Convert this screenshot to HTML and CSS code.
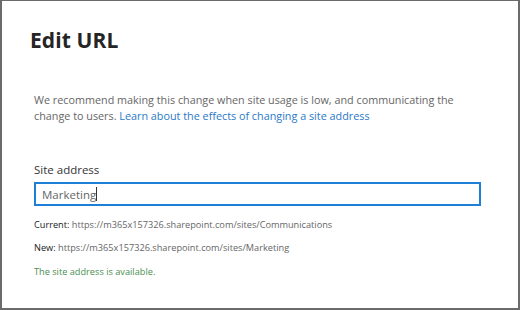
FILE: index.html
```html
<!DOCTYPE html>
<html lang="en">
<head>
    <meta charset="UTF-8">
    <link rel="stylesheet" href="styles.css">
</head>
<body>
    <div class="dialog">
        <h1 class="title">Edit URL</h1>

        <div class="content">
            <p class="intro">
                We recommend making this change when site usage is low, and communicating the<br>
                change to users. <a href="#" class="link">Learn about the effects of changing a site address</a>
            </p>

            <label class="field-label" for="site-address">Site address</label>
            <div class="field">
                <span class="field-value">Marketing</span><span class="caret"></span>
            </div>

            <p class="info"><span class="info-key">Current:</span> https://m365x157326.sharepoint.com/sites/Communications</p>
            <p class="info info-new"><span class="info-key">New:</span> https://m365x157326.sharepoint.com/sites/Marketing</p>
            <p class="status">The site address is available.</p>
        </div>
    </div>
</body>
</html>
```

FILE: styles.css
```css
html, body {
    margin: 0;
    padding: 0;
    background-color: #ffffff;
}

body {
    font-family: 'Open Sans', 'Noto Sans', sans-serif;
    color: #333333;
}

.dialog {
    box-sizing: border-box;
    width: 520px;
    height: 310px;
    border-top: 1px solid #6b6b6b;
    border-left: 2px solid #6b6b6b;
    border-right: 2px solid #6b6b6b;
    border-bottom: 2px solid #6b6b6b;
    padding: 24px 37px 0 28px;
}

.title {
    margin: 0;
    font-size: 21px;
    font-weight: 700;
    color: #252525;
    line-height: 30px;
    letter-spacing: 0.1px;
}

.content {
    padding: 0 0 0 4px;
    margin-top: 37px;
}

.intro {
    margin: 0;
    font-size: 10.8px;
    line-height: 16px;
    color: #666666;
    white-space: nowrap;
}

.link {
    color: #2a79c8;
    text-decoration: none;
}

.field-label {
    display: block;
    margin-top: 38px;
    font-size: 11.5px;
    line-height: 16px;
    color: #333333;
}

.field {
    box-sizing: border-box;
    height: 24px;
    margin-top: 4px;
    border: 2px solid #1e7fd6;
    padding: 0 6px;
    display: flex;
    align-items: center;
    font-size: 11.5px;
    color: #666666;
}

.caret {
    display: inline-block;
    width: 1px;
    height: 14px;
    background-color: #333333;
}

.info {
    margin: 12px 0 0;
    font-size: 9.2px;
    line-height: 13px;
    color: #666666;
}

.info-new {
    margin-top: 10px;
}

.info-key {
    color: #222222;
}

.status {
    margin: 11px 0 0;
    font-size: 9.2px;
    line-height: 13px;
    color: #4a8f4f;
}
```
